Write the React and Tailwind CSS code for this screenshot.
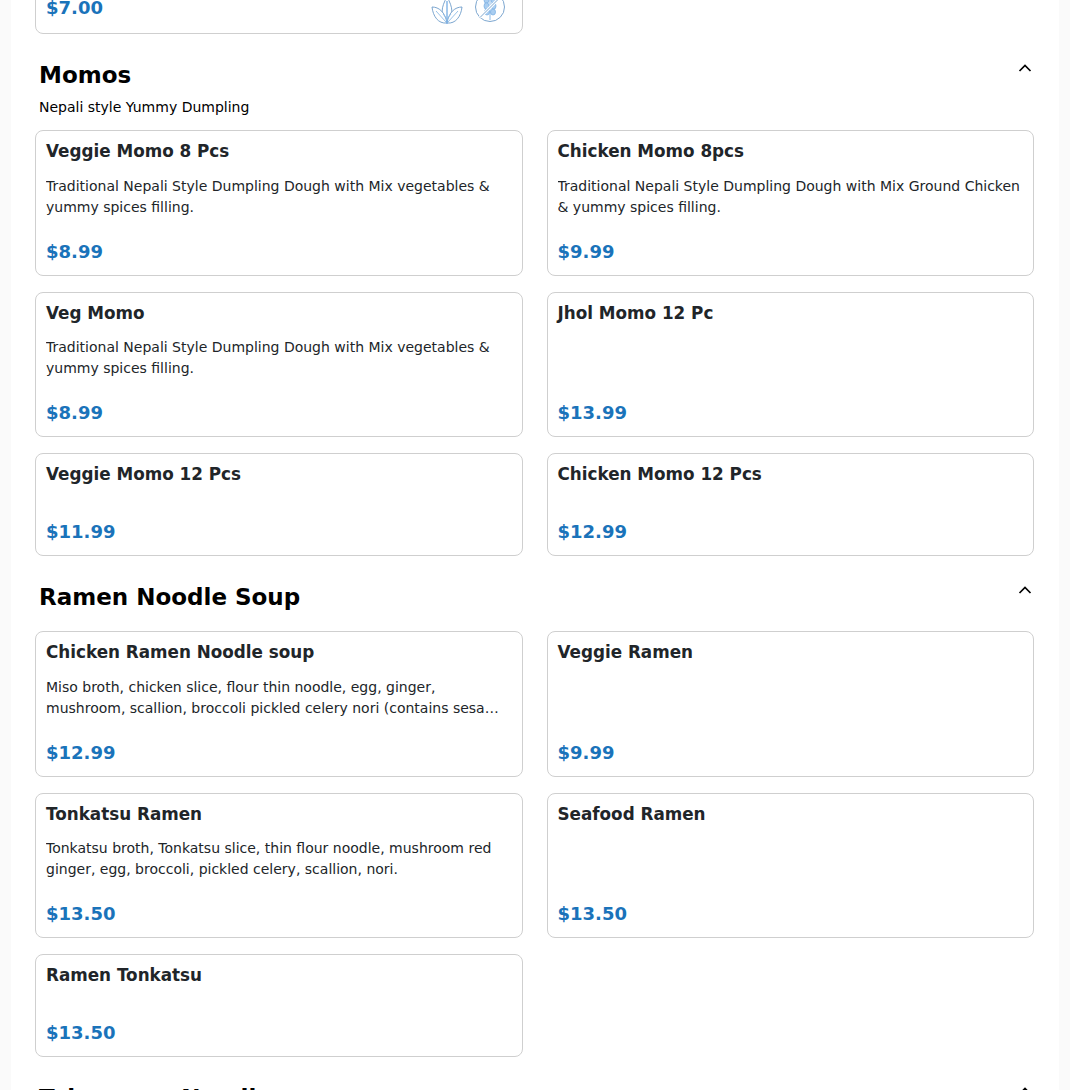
const sections = [
  {
    title: "Momos",
    note: "Nepali style Yummy Dumpling",
    items: [
      { name: "Veggie Momo 8 Pcs", desc: "Traditional Nepali Style Dumpling Dough with Mix vegetables & yummy spices filling.", price: "$8.99" },
      { name: "Chicken Momo 8pcs", desc: "Traditional Nepali Style Dumpling Dough with Mix Ground Chicken & yummy spices filling.", price: "$9.99" },
      { name: "Veg Momo", desc: "Traditional Nepali Style Dumpling Dough with Mix vegetables & yummy spices filling.", price: "$8.99" },
      { name: "Jhol Momo 12 Pc", blank: true, price: "$13.99" },
      { name: "Veggie Momo 12 Pcs", price: "$11.99" },
      { name: "Chicken Momo 12 Pcs", price: "$12.99" },
    ],
  },
  {
    title: "Ramen Noodle Soup",
    items: [
      { name: "Chicken Ramen Noodle soup", desc: "Miso broth, chicken slice, flour thin noodle, egg, ginger, mushroom, scallion, broccoli pickled celery nori (contains sesame seeds)", price: "$12.99" },
      { name: "Veggie Ramen", blank: true, price: "$9.99" },
      { name: "Tonkatsu Ramen", desc: "Tonkatsu broth, Tonkatsu slice, thin flour noodle, mushroom red ginger, egg, broccoli, pickled celery, scallion, nori.", price: "$13.50" },
      { name: "Seafood Ramen", blank: true, price: "$13.50" },
      { name: "Ramen Tonkatsu", price: "$13.50" },
    ],
  },
]

const Chevron = () => (
  <svg width="14" height="8" viewBox="0 0 14 8" fill="none" stroke="#000" strokeWidth="1.7">
    <path d="M1.5 7 L7 1.5 L12.5 7" />
  </svg>
)

const LeafIcon = () => (
  <svg width="32" height="26" viewBox="0 0 32 26" fill="none" stroke="#6d9cc9" strokeWidth="0.9">
    <path d="M16 24 C9 17 10 8 16 -2 C22 8 23 17 16 24 Z" />
    <path d="M16 24 C7 25 2 17 1 8 C8 8 14 13 16 24 Z" fill="#fff" />
    <path d="M16 24 C25 25 30 17 31 8 C24 8 18 13 16 24 Z" fill="#fff" />
    <path d="M16 25 V2" stroke="#7fb2e5" strokeWidth="1.4" />
    <path d="M5 12 L15 23 M27 12 L17 23 M16 20 L12 15 M16 20 L20 15" stroke="#8fbce8" />
  </svg>
)

const GlutenIcon = () => (
  <svg width="32" height="26" viewBox="0 0 32 26" fill="none" stroke="#6d9cc9" strokeWidth="0.9">
    <circle cx="16" cy="8" r="14.5" />
    <g fill="#a9cdf0" stroke="#7fb2e5" strokeWidth="0.8">
      <ellipse cx="12.5" cy="1" rx="2.5" ry="3.2" />
      <ellipse cx="19.5" cy="1" rx="2.5" ry="3.2" />
      <ellipse cx="12.5" cy="7" rx="2.5" ry="3.2" />
      <ellipse cx="19.5" cy="7" rx="2.5" ry="3.2" />
      <ellipse cx="13" cy="13" rx="2.5" ry="3" />
      <ellipse cx="19" cy="13" rx="2.5" ry="3" />
    </g>
    <path d="M16 -4 V21" stroke="#7fb2e5" />
    <path d="M6 18.5 L26.5 -2" stroke="#fff" strokeWidth="3" />
    <path d="M6 18.5 L26.5 -2" />
  </svg>
)

const Card = ({ item }) => (
  <div className="bg-white border border-[#cfcfcf] rounded-lg px-[10px] pt-[9px] pb-[11px] flex flex-col">
    <div className="text-[16.8px] leading-[22px] font-bold text-[#212529]">{item.name}</div>
    {item.desc && <p className="mt-[13.5px] text-sm leading-[21px] text-[#212529] line-clamp-2">{item.desc}</p>}
    {item.blank && <div className="mt-[13.5px] h-[42px]" />}
    <div className={`text-lg leading-[24px] font-bold text-[#1a73ba] ${item.desc || item.blank ? "mt-[22px]" : "mt-[35px]"}`}>{item.price}</div>
  </div>
)

const SectionHead = ({ children }) => (
  <div className="flex justify-between items-start pl-1 pr-[2px]">
    <h2 className="text-[23px] leading-[40px] font-bold text-black">{children}</h2>
    <div className="pt-[9px]"><Chevron /></div>
  </div>
)

const Section = ({ section }) => (
  <section className="mt-[21px]">
    <SectionHead>{section.title}</SectionHead>
    {section.note && <p className="px-1 mt-[2px] text-sm leading-[21px] text-black">{section.note}</p>}
    <div className={`grid grid-cols-2 gap-x-6 gap-y-4 ${section.note ? "mt-[12px]" : "mt-[14px]"}`}>
      {section.items.map((item) => <Card key={item.name} item={item} />)}
    </div>
  </section>
)

export default function App() {
  return (
    <div className="h-[1090px] overflow-hidden bg-[#fafafa] px-[11px] font-['DejaVu_Sans',sans-serif]">
      <div className="h-full overflow-hidden bg-white px-6">
        <div className="-mt-[60px] pr-px">
          <div className="bg-white border border-[#cfcfcf] rounded-lg px-[10px] h-[94px] w-[488px] flex justify-between items-end pb-[8px]">
            <div className="text-lg leading-[24px] font-bold text-[#1a73ba] mb-[5px]">$7.00</div>
            <div className="flex gap-[11px] pr-[6px]">
              <LeafIcon />
              <GlutenIcon />
            </div>
          </div>
          {sections.map((section) => <Section key={section.title} section={section} />)}
          <section className="mt-[21px]">
            <SectionHead>
              Taiwanese Noodle <span className="ml-1 text-sm font-normal text-[#777]">(Lunch)</span>
            </SectionHead>
          </section>
        </div>
      </div>
    </div>
  )
}
